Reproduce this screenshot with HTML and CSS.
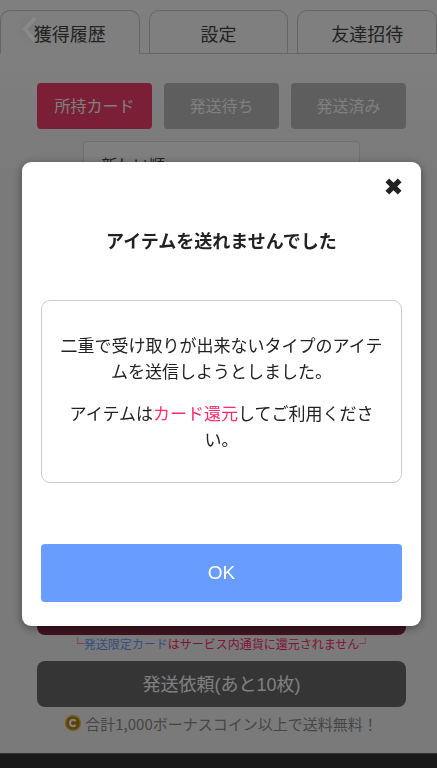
FILE: index.html
```html
<!DOCTYPE html>
<html lang="ja">
<head>
<meta charset="utf-8">
<meta name="viewport" content="width=device-width, initial-scale=1">
<title>獲得履歴</title>
<link rel="stylesheet" href="styles.css">
</head>
<body>
<div class="page">
  <nav class="tabs">
    <a class="tab tab-active" href="#history">獲得履歴</a>
    <a class="tab" href="#settings">設定</a>
    <a class="tab" href="#invite">友達招待</a>
  </nav>
  <main class="content">
    <div class="filters">
      <button class="filter filter-on" type="button">所持カード</button>
      <button class="filter" type="button">発送待ち</button>
      <button class="filter" type="button">発送済み</button>
    </div>
    <div class="sort">
      <select class="sort-select" aria-label="並び順"><option>新しい順</option></select>
      <svg class="sort-arrow" viewBox="0 0 14 8" aria-hidden="true"><path d="M1 1l6 6 6-6"/></svg>
    </div>
    <div class="actions">
      <button class="action action-redeem" type="button" aria-label="カード還元"></button>
      <p class="note">└<span class="note-link">発送限定カード</span>はサービス内通貨に還元されません┘</p>
      <button class="action" type="button">発送依頼(あと10枚)</button>
      <p class="shipping">
        <svg class="coin" viewBox="0 0 16 16" aria-hidden="true">
          <circle class="coin-rim" cx="8" cy="8" r="8"/>
          <circle class="coin-face" cx="8" cy="8" r="6.6"/>
          <path class="coin-mark" d="M10.6 6.2A3.1 3.1 0 1 0 10.6 9.8"/>
        </svg>
        <span>合計1,000ボーナスコイン以上で送料無料！</span>
      </p>
    </div>
  </main>
  <footer class="footer"></footer>
</div>
<div class="overlay">
  <a class="back" href="#back" aria-label="戻る">
    <svg class="back-icon" viewBox="0 0 16 28" aria-hidden="true"><path d="M13 2L3 13l10 12"/></svg>
  </a>
  <section class="modal" role="dialog" aria-modal="true" aria-labelledby="modal-title">
    <button class="close" type="button" aria-label="閉じる">
      <svg class="close-icon" viewBox="0 0 16 16" aria-hidden="true"><path d="M2.2 2.2l11.6 11.6M13.8 2.2L2.2 13.8"/></svg>
    </button>
    <h1 class="title" id="modal-title">アイテムを送れませんでした</h1>
    <div class="message">
      <p>二重で受け取りが出来ないタイプのアイテムを送信しようとしました。</p>
      <p>アイテムは<span class="accent">カード還元</span>してご利用ください。</p>
    </div>
    <button class="ok" type="button">OK</button>
  </section>
</div>
</body>
</html>
```
FILE: styles.css
```css
* {
  box-sizing: border-box;
}

body {
  margin: 0;
  font-family: "Noto Sans CJK JP", sans-serif;
  color: #222;
}

button,
select {
  font-family: "Liberation Sans", "Noto Sans CJK JP", sans-serif;
  border: 0;
}

p {
  margin: 0;
}

.page {
  display: flex;
  flex-direction: column;
  min-height: 100vh;
  padding-top: 10px;
  background: linear-gradient(#fff, #fff 54px, #f4f4f4 180px);
}

.tabs {
  display: grid;
  grid-template-columns: repeat(3, 1fr);
  gap: 9px;
  background: linear-gradient(#d2d2d2, #d2d2d2) bottom / 100% 1px no-repeat;
}

.tab {
  height: 44px;
  border: 1px solid #cacaca;
  border-radius: 10px 10px 0 0;
  font-size: 18px;
  line-height: 44px;
  text-align: center;
  text-decoration: none;
  color: #444;
}

.tab-active {
  background: #fff;
  border-bottom-color: #fff;
}

.content {
  display: flex;
  flex: 1;
  flex-direction: column;
  padding: 29px 31px 18px 37px;
}

.filters {
  display: grid;
  grid-template-columns: repeat(3, 1fr);
  gap: 12px;
}

.filter {
  height: 46px;
  padding: 0 0 3px;
  border-radius: 4px;
  background: #bcbcbc;
  color: #fff;
  font-size: 16px;
}

.filter-on {
  background: #f63e6e;
}

.sort {
  position: relative;
  width: 75%;
  margin: 12px auto;
}

.sort-select {
  appearance: none;
  width: 100%;
  height: 48px;
  padding: 0 17px;
  border: 1px solid #dedede;
  border-radius: 4px;
  background: #fff;
  color: #444;
  font-size: 16px;
}

.sort-arrow {
  position: absolute;
  top: 20px;
  right: 19px;
  width: 14px;
  fill: none;
  stroke: #bbb;
}

.actions {
  margin-top: auto;
  text-align: center;
}

.action {
  display: block;
  width: 100%;
  height: 46px;
  padding: 0 0 2px;
  border-radius: 8px;
  background: #6a6a6a;
  color: #fff;
  font-size: 18px;
}

.action-redeem {
  background: #7e2640;
}

.note {
  height: 26px;
  font-size: 12px;
  line-height: 18px;
  white-space: nowrap;
  color: #ff2a6a;
}

.note-link {
  color: #6c9cff;
}

.shipping {
  display: flex;
  align-items: center;
  justify-content: center;
  gap: 4px;
  height: 28px;
  padding-top: 4px;
  font-size: 15px;
  white-space: nowrap;
  color: #8c8c8c;
}

.coin {
  width: 16px;
  height: 16px;
}

.coin-rim {
  fill: #e0b840;
}

.coin-face {
  fill: #b88400;
}

.coin-mark {
  fill: none;
  stroke: #fff;
  stroke-width: 2.4;
}

.footer {
  height: 15px;
  border-top: 1px solid #666;
  background: #333;
}

.overlay {
  position: fixed;
  inset: 0;
  display: flex;
  flex-direction: column;
  justify-content: center;
  padding: 20px 16px 0 22px;
  background: rgba(0, 0, 0, 0.5);
}

.back {
  position: absolute;
  top: 16px;
  left: 22px;
  opacity: 0.1;
}

.back-icon {
  display: block;
  width: 16px;
  height: 28px;
  overflow: visible;
  fill: none;
  stroke: #ddd;
  stroke-width: 4;
  filter: drop-shadow(0 0 5px #000);
}

.modal {
  display: flex;
  flex-direction: column;
  padding: 16px 19px 24px;
  border-radius: 9px;
  background: #fff;
  box-shadow: 0 2px 10px rgba(0, 0, 0, 0.4);
}

.close {
  align-self: flex-end;
  padding: 0;
  background: none;
}

.close-icon {
  display: block;
  width: 17px;
  height: 17px;
  fill: none;
  stroke: #222;
  stroke-width: 5;
}

.title {
  margin: 32px 0 47px;
  font-size: 18px;
  line-height: 26px;
  text-align: center;
}

.message {
  display: flex;
  flex-direction: column;
  gap: 16px;
  padding: 31px 14px 30px;
  border: 1px solid #ccc;
  border-radius: 9px;
  font-size: 17px;
  line-height: 26px;
  text-align: center;
}

.accent {
  color: #ff2a6a;
}

.ok {
  height: 58px;
  margin-top: 61px;
  border-radius: 4px;
  background: #689cff;
  color: #fff;
  font-size: 19px;
}
```
